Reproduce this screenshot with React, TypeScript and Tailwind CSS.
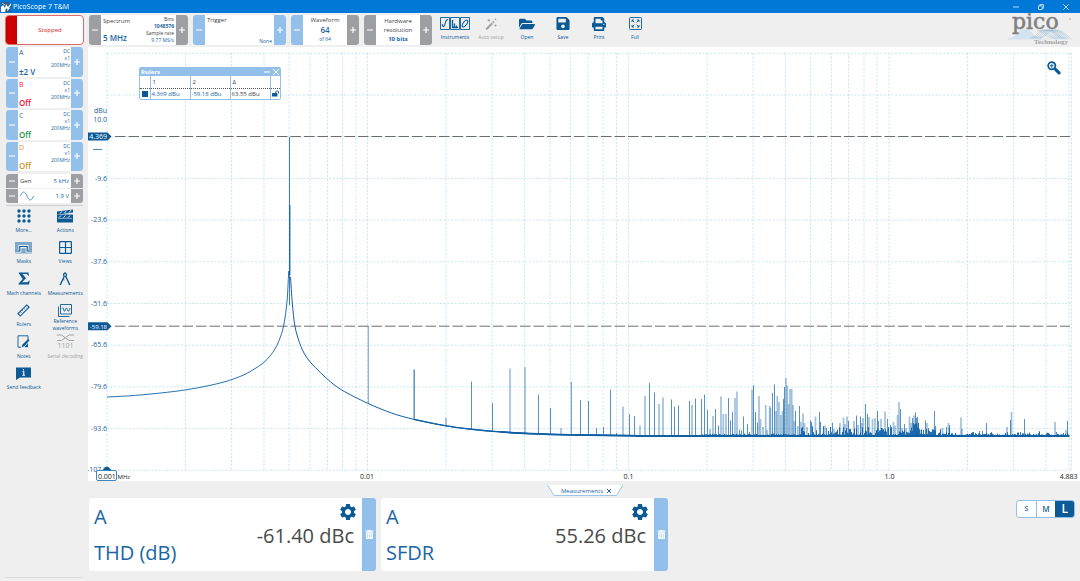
import React from "react";
import { FaFolderOpen, FaSave, FaPrint, FaLockOpen, FaTrashAlt } from "react-icons/fa";
import { MdSettings } from "react-icons/md";

type Tone = "blue" | "gray";

const toneClass: Record<Tone, string> = {
  blue: "bg-[#93c0ea]",
  gray: "bg-[#9e9fa2]",
};

function StepButton({ tone, kind, label }: { tone: Tone; kind: "minus" | "plus"; label: string }) {
  return (
    <button type="button" aria-label={label} className={`flex w-[12px] shrink-0 items-center justify-center ${toneClass[tone]}`}>
      <svg viewBox="0 0 6 6" className="h-[6px] w-[6px]" stroke="#fff" strokeWidth="1.2" fill="none">
        <path d={kind === "minus" ? "M0 3H6" : "M0 3H6M3 0V6"} />
      </svg>
    </button>
  );
}

function Stepper({ name, left, right, width, children }: { name: string; left: Tone; right: Tone; width: string; children: React.ReactNode }) {
  return (
    <div className={`flex h-[30px] shrink-0 overflow-hidden rounded-[3px] bg-white ${width}`}>
      <StepButton tone={left} kind="minus" label={`Decrease ${name}`} />
      {children}
      <StepButton tone={right} kind="plus" label={`Increase ${name}`} />
    </div>
  );
}

function Channel({ name, value, color }: { name: string; value: string; color: string }) {
  return (
    <div className="flex overflow-hidden rounded-[3px] bg-white">
      <StepButton tone="blue" kind="minus" label={`Decrease range ${name}`} />
      <div className="flex min-w-0 flex-1 justify-between pr-px pl-px">
        <div className={`flex flex-col justify-between pt-px text-[8px] leading-[10px] ${color}`}>
          <span className="text-[7px]">{name}</span>
          <span className="font-semibold">{value}</span>
        </div>
        <div className="pt-px text-right text-[5px] leading-[7px] text-[#2d6497]">
          <div>DC</div>
          <div>x1</div>
          <div>200MHz</div>
        </div>
      </div>
      <StepButton tone="blue" kind="plus" label={`Increase range ${name}`} />
    </div>
  );
}

function Tool({ label, children, disabled = false }: { label: string; children: React.ReactNode; disabled?: boolean }) {
  return (
    <button type="button" disabled={disabled} className={`flex h-[32px] w-[36px] shrink-0 flex-col items-center ${disabled ? "text-[#a3a3a3]" : "text-[#0b5a96]"}`}>
      <span className="flex h-[17px] shrink-0 items-center justify-center">{children}</span>
      <span className="mt-[2px] text-[5px] leading-[6px] whitespace-nowrap">{label}</span>
    </button>
  );
}

function SideTool({ label, children, disabled = false }: { label: string; children: React.ReactNode; disabled?: boolean }) {
  return (
    <button type="button" disabled={disabled} className={`flex flex-col items-center pt-[2px] ${disabled ? "text-[#a3a3a3]" : "text-[#0b5a96]"}`}>
      <span className="flex h-[15px] items-center justify-center">{children}</span>
      <span className="flex h-[14px] items-center text-center text-[5px] leading-[7px] whitespace-pre-line">{label}</span>
    </button>
  );
}

const X0 = 107;
const DECADE = 260.7;
const BASE = 436;

const gridX: number[] = [];
for (let d = 0; d < 4; d++) {
  for (let n = 1; n < 10; n++) {
    const x = X0 + DECADE * (d + Math.log10(n));
    if (x < 1060) gridX.push(Math.round(x * 2) / 2);
  }
}
gridX.push(1069, 1071.5);
const gridY = Array.from({ length: 11 }, (_, i) => 53.3 + i * 41.7);

/* Harmonic lines: x, top, and 1 for a faint two pixel wide line */
const spikes: [number, number, number][] = [
  [446, 418, 0], [471.5, 381.5, 0], [492.5, 403, 0], [510, 368.5, 1], [525, 367, 1], [538.5, 394.5, 0], [550.5, 408, 0],
  [561, 428, 1], [571.3, 382, 0], [580.5, 400, 0], [588.5, 401, 0], [596.5, 428, 0], [603.5, 427, 0], [610.5, 389.5, 0],
  [616.5, 433, 0], [623, 406.5, 1], [629.5, 414, 0], [634.5, 416, 0], [640, 425.5, 1], [645, 396, 1], [649.5, 383, 0],
  [654.5, 392.5, 0], [659, 404, 1], [663, 397.5, 1], [671.5, 399.5, 0], [674.5, 406.5, 0], [678.5, 405.5, 0], [689.5, 401, 0],
  [692, 405, 1], [695.5, 398.5, 0], [701.5, 399, 0], [704.5, 394.5, 0], [707.5, 410, 0], [710, 429, 0], [713, 416, 1],
  [715.5, 409, 0], [718.5, 425.5, 0], [721, 396.5, 1], [723.3, 414, 1], [726, 414, 1], [728.5, 398, 0], [730.5, 420.5, 0],
  [732.5, 412, 0], [735, 398, 1], [737, 391.5, 1], [739.5, 429.5, 0], [741.5, 430.5, 0], [743.5, 416.5, 0], [747.5, 424, 0],
  [749.5, 432, 0], [752, 389.5, 1], [753.5, 385, 0], [755.5, 412, 0], [757.5, 422.5, 0], [759, 396, 1], [760.5, 419, 1],
  [763, 427, 1], [765.7, 405, 1], [767, 430, 1], [769.7, 406, 1], [770.5, 408, 1], [772.5, 393, 0], [774.5, 384.5, 0],
  [776, 411, 1], [777.3, 396, 1], [779, 402, 1], [780.8, 415, 1], [782.5, 411, 1], [783.5, 399, 0], [784.5, 387, 0],
  [786, 378, 1], [787.3, 385.5, 1], [788.6, 404, 1], [790, 389, 1], [791.7, 389, 1], [793, 405, 1], [794.3, 421, 1],
  [795.5, 411, 0], [797.8, 426, 1], [799.5, 406, 0], [801, 422, 1], [803, 413.5, 1], [804.5, 423, 1], [807, 427, 1],
  [810.5, 420.5, 0], [811.5, 422, 0], [815.5, 416.5, 1], [819.5, 412, 0], [820.5, 422, 0], [825, 425.5, 1], [826.5, 428, 0],
  [832.5, 422.7, 0], [834, 429, 1], [840, 423, 1], [843.5, 417.5, 1], [845, 424, 0], [847, 416.5, 1], [848.5, 421, 0],
  [850, 430, 0], [854, 421, 1], [856.5, 415.5, 0], [858, 425, 0], [860.5, 416.5, 0], [861.5, 423, 1], [863, 418, 1],
  [865.5, 404, 0], [867.5, 414, 0], [869, 417, 1], [872.5, 419, 1], [875, 418, 1], [877.5, 411, 0], [878.5, 421, 0],
  [881, 419, 1], [882.5, 428, 0], [885, 411.5, 1], [887.5, 419, 0], [890.5, 425, 0], [893.5, 422, 1], [895, 426, 0],
  [897.5, 415, 1], [899, 402, 1], [900.5, 409, 0], [902, 428, 0], [904.5, 424, 0], [906, 428, 1], [909.5, 416.5, 1],
  [911, 423, 0], [912.5, 418, 0], [914, 415.5, 0], [915.5, 412.5, 0], [916.5, 418, 0], [917.5, 417, 0], [919, 428, 0],
  [921, 430, 0], [925.5, 420.5, 0], [927, 423, 1], [928.5, 428, 0], [934.5, 411, 0], [935.5, 426, 0], [940, 432, 0],
  [942.5, 428, 1], [946.5, 427, 0], [948.5, 423, 1], [949.5, 425, 0], [961, 417.5, 1], [962, 429, 0], [979.5, 431, 0],
  [982.5, 431, 0], [986.5, 423, 0], [1007, 427, 1], [1010.5, 420, 0], [1011.5, 412, 1], [1024.5, 419, 0], [1039.5, 431, 0],
  [1055, 422, 1], [1056.5, 432, 0], [1067.5, 421, 0], [1066, 430, 0],
];

/* Noise floor, a height envelope over the upper decade */
const noise: string = (() => {
  let seed = 7;
  const rnd = () => {
    seed = (seed * 16807) % 2147483647;
    return seed / 2147483647;
  };
  let d = "";
  for (let x = 700; x < 1069; x += 1) {
    const hump = 14 * Math.exp(-(((x - 914) / 5) ** 2));
    const mid = x > 800 && x < 955 ? 9 : x <= 800 ? 1.5 : 3;
    const r = rnd();
    const h = 1 + mid * r * r * r + hump * (0.3 + rnd() * 0.7);
    d += `M${x + 0.5} ${BASE}V${(BASE - h).toFixed(1)}`;
  }
  return d;
})();

type Point = [number, number];

const leftSkirt: Point[] = [
  [107, 397], [130, 395.8], [155, 393.6], [180, 390.7], [203, 386.8], [225, 381.7], [245, 374.3], [264, 362.3],
  [275, 349], [281.7, 333.3], [285, 318], [287.3, 298], [288.7, 271],
];
const rightSkirt: Point[] = [
  [290.5, 277], [292.3, 303], [295, 326.7], [301, 346.7], [309.3, 361], [327.3, 379], [341.7, 390], [367.7, 403.3],
  [391.7, 413.1], [414, 419.4], [446.3, 425.9], [471.7, 429.3], [500, 431.9], [530, 433.6], [571, 434.8], [640, 435.8],
];

/* Catmull-Rom spline through the points, written as cubic segments */
function smooth(points: Point[]): string {
  let d = `M${points[0][0]} ${points[0][1]}`;
  for (let i = 0; i < points.length - 1; i++) {
    const p0 = points[Math.max(i - 1, 0)];
    const p1 = points[i];
    const p2 = points[i + 1];
    const p3 = points[Math.min(i + 2, points.length - 1)];
    const t = 7;
    d += `C${p1[0] + (p2[0] - p0[0]) / t} ${p1[1] + (p2[1] - p0[1]) / t} ${p2[0] - (p3[0] - p1[0]) / t} ${p2[1] - (p3[1] - p1[1]) / t} ${p2[0]} ${p2[1]}`;
  }
  return d;
}

/* Height of the falling curve under a harmonic line */
function floorAt(x: number): number {
  for (let i = 0; i < rightSkirt.length - 1; i++) {
    const [xa, ya] = rightSkirt[i];
    const [xb, yb] = rightSkirt[i + 1];
    if (x >= xa && x <= xb) return ya + ((yb - ya) * (x - xa)) / (xb - xa);
  }
  return BASE;
}

const yLabels: [string, number][] = [
  ["-9.6", 178.3], ["-23.6", 220], ["-37.6", 261.7], ["-51.6", 303.4], ["-65.6", 345], ["-79.6", 386.8], ["-93.6", 428.5], ["-107.6", 470],
];

function Badge({ y, text, size }: { y: number; text: string; size: number }) {
  return (
    <g>
      <path d={`M88 ${y - 4}H107.500L111.500 ${y}L107.500 ${y + 4}H88Z`} fill="#0b5a96" />
      <text x="107" y={y + 2.5} textAnchor="end" fontSize={size} fill="#fff">{text}</text>
    </g>
  );
}

function SpectrumChart() {
  return (
    <svg viewBox="88 47 992 434" className="block h-auto w-full" role="img" aria-label="Spectrum" fontSize="7">
      <g stroke="#b9e0ee" strokeWidth="0.8" strokeDasharray="2 1.7" fill="none">
        {gridX.map((x) => <path key={x} d={`M${x} 53V470`} />)}
        {gridY.map((y) => <path key={y} d={`M107 ${y}H1071.5`} />)}
      </g>
      <g fill="#1a65a3">
        <text x="107" y="113" textAnchor="end">dBu</text>
        <text x="107" y="122" textAnchor="end">10.0</text>
        {yLabels.map(([t, y]) => <text key={t} x="107" y={y + 2.3} textAnchor="end">{t}</text>)}
      </g>
      <path d="M93 149.5H102" stroke="#1a65a3" strokeWidth="0.8" />
      <g stroke="#6d6d6d" strokeWidth="1" strokeDasharray="10.5 3">
        <path d="M115 136.5H1070" />
        <path d="M115 326.2H1070" />
      </g>
      <g stroke="#0f5fa5" fill="none">
        <path strokeWidth="0.9" d={smooth(leftSkirt)} />
        <path strokeWidth="1" d={smooth(rightSkirt)} />
        <path strokeWidth="1.4" d={smooth(rightSkirt.slice(9))} />
        <path strokeWidth="1.8" d={smooth(rightSkirt.slice(12))} />
        <path strokeWidth="2.2" d="M636 436H1069.5" />
        <path strokeWidth="1" opacity="0.8" d="M289.5 137V305" />
        <path strokeWidth="1.4" opacity="0.8" d="M289.8 205V275" />
        <path strokeWidth="1" opacity="0.6" d="M368.3 326V403.5" />
        <path strokeWidth="1.6" opacity="0.65" d="M414.2 369.5V420" />
      </g>
      <path d={noise} stroke="#0f5fa5" strokeWidth="1" opacity="0.9" />
      <g stroke="#1464a8">
        {spikes.map(([x, y, faint]) => (
          <path key={`${x}`} d={`M${x} ${y}V${floorAt(x)}`} strokeWidth={faint ? 1.7 : 1} opacity={faint ? 0.4 : 0.7} />
        ))}
      </g>
      <Badge y={136.5} text="4.369" size={7} />
      <Badge y={326.2} text="-59.18" size={6} />
      <path d="M102.500 470L105.500 467.200Q107 466 108.500 467.200L111.500 470Z" fill="#0b5a96" />
      <rect x="96.500" y="470.500" width="20" height="10" rx="1.500" fill="#fff" stroke="#3f86bf" strokeWidth="1" />
      <g fill="#222">
        <text x="98" y="478.500">0.001</text>
        <text x="117.500" y="478.500" fontSize="6">MHz</text>
        <text x="367" y="478.500" textAnchor="middle">0.01</text>
        <text x="628.500" y="478.500" textAnchor="middle">0.1</text>
        <text x="889.500" y="478.500" textAnchor="middle">1.0</text>
        <text x="1077.500" y="478.500" textAnchor="end">4.883</text>
      </g>
    </svg>
  );
}

function RulersWindow() {
  return (
    <section aria-label="Rulers" className="absolute top-[20px] left-[51px] w-[142px] rounded-[2px] border border-[#93c0ea] bg-white text-[6px]">
      <header className="flex h-[8px] items-center bg-[#93c0ea] text-white">
        <h2 className="flex-1 pl-px text-[6px] leading-[8px] font-bold">Rulers</h2>
        <button type="button" aria-label="Minimise rulers" className="flex w-[9px] justify-center">
          <svg viewBox="0 0 6 6" className="h-[6px] w-[6px]" stroke="#fff"><path d="M0 3H6" /></svg>
        </button>
        <button type="button" aria-label="Close rulers" className="flex w-[9px] justify-center">
          <svg viewBox="0 0 6 6" className="h-[6px] w-[6px]" stroke="#fff"><path d="M0 0L6 6M6 0L0 6" /></svg>
        </button>
      </header>
      <table className="w-full table-fixed border-collapse">
        <colgroup>
          <col className="w-[10px]" />
          <col className="w-[40px]" />
          <col className="w-[40px]" />
          <col className="w-[40px]" />
          <col />
        </colgroup>
        <thead>
          <tr className="h-[12px] border-b border-dotted border-[#555] text-left text-[#444]">
            <th className="p-0" />
            <th className="border-l border-[#93c0ea] p-0 pl-[2px] leading-[10px] font-normal">1</th>
            <th className="border-l border-[#93c0ea] p-0 pl-[2px] leading-[10px] font-normal">2</th>
            <th className="border-l border-[#93c0ea] p-0 pl-[2px] leading-[10px] font-normal">Δ</th>
            <th className="border-l border-[#93c0ea] p-0" />
          </tr>
        </thead>
        <tbody>
          <tr className="h-[10px] whitespace-nowrap text-[#1a65a3]">
            <td className="p-0"><div className="mx-auto h-[6px] w-[6px] bg-[#0b5a96]" /></td>
            <td className="border-l border-[#93c0ea] p-0 pl-px leading-[10px]">4.369 dBu</td>
            <td className="border-l border-[#93c0ea] p-0 pl-px leading-[10px]">-59.18 dBu</td>
            <td className="border-l border-[#93c0ea] p-0 pl-px leading-[10px] text-[#444]">63.55 dBu</td>
            <td className="border-l border-[#93c0ea] p-0"><FaLockOpen className="mx-auto h-[7px] w-[7px] text-[#0b5a96]" /></td>
          </tr>
        </tbody>
      </table>
    </section>
  );
}

function Measurement({ source, name, value }: { source: string; name: string; value: string }) {
  return (
    <article className="flex h-[73px] w-[287px] overflow-hidden rounded-[3px] bg-white">
      <div className="flex flex-1 justify-between pr-[4px] pl-[5px] text-[20px]">
        <div className="flex flex-col gap-[10px] pt-[6px] leading-[26px] text-[#1a65a3]">
          <span>{source}</span>
          <span>{name}</span>
        </div>
        <div className="flex flex-col items-end pt-[4px] text-[#4a4a4a]">
          <button type="button" aria-label={`${name} settings`} className="text-[#0b5a96]"><MdSettings className="block h-[20px] w-[20px]" /></button>
          <span className="pr-[4px] leading-[27px]">{value}</span>
        </div>
      </div>
      <button type="button" aria-label={`Delete ${name}`} className="flex w-[14px] items-center justify-center bg-[#93c0ea] text-white">
        <FaTrashAlt className="h-[9px] w-[9px]" />
      </button>
    </article>
  );
}

function PicoLogo() {
  return (
    <svg viewBox="0 0 66 32" className="h-[32px] w-[66px] shrink-0 overflow-visible" role="img" aria-label="pico Technology">
      <g fill="none" strokeWidth="0.5">
        <path d="M0 24C8 24 10 15 17 15S26 24 33 24" stroke="#b9d3e8" fill="#d3e4f1" />
        {[0, 2, 4, 6, 8, 10].map((i) => (
          <path key={i} d={`M${22 + i} 23C${28 + i} 23 ${30 + i} 15 ${36 + i} 15S${46 + i} 17 ${52 + i} 23`} stroke="#9bbdd6" />
        ))}
        {[0, 3, 6, 9, 12].map((i) => (
          <path key={`b${i}`} d={`M${29 + i} 15C${35 + i} 16 ${38 + i} 23 ${48 + i} 23.500`} stroke="#9bbdd6" />
        ))}
        <path d="M0 24H64" stroke="#c5d9e8" />
      </g>
      <text x="4" y="14" fontFamily="'DejaVu Serif', serif" fontSize="22" fill="#808080" stroke="#808080" strokeWidth="0.500">pico</text>
      <text x="26" y="29" fontFamily="'Liberation Serif', serif" fontSize="7" fontWeight="700" fill="#a3a3a3">Technology</text>
      <circle cx="62" cy="4" r="0.800" fill="none" stroke="#999" strokeWidth="0.400" />
    </svg>
  );
}

export default function App() {
  return (
    <div className="flex min-h-screen flex-col bg-[#efefef] font-['Open_Sans','Noto_Sans',sans-serif] text-[#444]">
      <header className="flex h-[13px] items-center bg-[#0078d7] text-white">
        <svg viewBox="0 0 10 10" className="ml-px h-[10px] w-[10px]">
          <path d="M0 0H10V10H0Z" fill="#2d5f8f" />
          <path d="M0 10V5L2 3L4 6L5 2L7 5L10 1V3L7 8L5 6L4 10Z" fill="#fff" />
          <path d="M1 1L4 3M6 9L9 6" stroke="#cfe4f6" strokeWidth="0.800" />
        </svg>
        <h1 className="ml-[2px] flex-1 text-[7px] leading-[12px]">PicoScope 7 T&amp;M</h1>
        <div className="flex gap-[4px] pr-[4px]">
          <button type="button" aria-label="Minimise" className="flex w-[21px] justify-center"><svg viewBox="0 0 6 6" className="h-[6px] w-[6px]" fill="none" stroke="#fff" strokeWidth="0.700"><path d="M0 3H6" /></svg></button>
          <button type="button" aria-label="Restore" className="flex w-[21px] justify-center"><svg viewBox="0 0 6 6" className="h-[6px] w-[6px]" fill="none" stroke="#fff" strokeWidth="0.700"><path d="M0.500 1.800H4.200V5.500H0.500ZM1.800 1.600V0.500H5.500V4.200H4.400" /></svg></button>
          <button type="button" aria-label="Close" className="flex w-[21px] justify-center"><svg viewBox="0 0 6 6" className="h-[6px] w-[6px]" fill="none" stroke="#fff" strokeWidth="0.700"><path d="M0.300 0.300L5.700 5.700M5.700 0.300L0.300 5.700" /></svg></button>
        </div>
      </header>

      <div className="flex flex-1">
        <aside className="flex w-[88px] shrink-0 flex-col pt-[2px] pb-[3px]">
          <button type="button" className="mr-[4px] ml-[5px] flex h-[30px] overflow-hidden rounded-[4px] border border-[#dc6a6a] bg-white">
            <span className="h-full w-[11px] bg-[#cc0000]" />
            <span className="flex h-full flex-1 items-center justify-center text-[6px] font-medium text-[#cc1818]">Stopped</span>
          </button>
          <div className="mt-[2px] mr-[5px] ml-[6px] grid h-[124px] grid-rows-4 gap-[2px]">
            <Channel name="A" value="±2 V" color="text-[#1a65a3]" />
            <Channel name="B" value="Off" color="text-[#f0143c]" />
            <Channel name="C" value="Off" color="text-[#1f9448]" />
            <Channel name="D" value="Off" color="text-[#cf9a2c]" />
          </div>
          <div className="mt-[3px] mr-[5px] ml-[6px] flex flex-col gap-px overflow-hidden rounded-[3px] text-[6px]">
            <div className="flex h-[14px]">
              <StepButton tone="gray" kind="minus" label="Decrease frequency" />
              <div className="flex flex-1 items-center justify-between bg-white px-[2px]"><span>Gen</span><span className="text-[#1a65a3]">5 kHz</span></div>
              <StepButton tone="gray" kind="plus" label="Increase frequency" />
            </div>
            <div className="flex h-[14px]">
              <StepButton tone="gray" kind="minus" label="Decrease amplitude" />
              <div className="flex flex-1 items-center justify-between bg-white px-[2px] text-[#1a65a3]">
                <svg viewBox="0 0 14 10" className="h-[10px] w-[14px]" fill="none" stroke="#4b87ba" strokeWidth="0.900"><path d="M0.500 5C2 0 5 -0.500 7 5S12 10 13.500 5" /></svg>
                <span>1.9 V</span>
              </div>
              <StepButton tone="gray" kind="plus" label="Increase amplitude" />
            </div>
          </div>
          <hr className="mt-[2px] mr-[5px] ml-[6px] border-[#cfcfcf]" />
          <nav aria-label="Tools" className="ml-[3px] grid h-[189px] w-[83px] grid-cols-2 grid-rows-6">
            <SideTool label="More...">
              <svg viewBox="0 0 14 14" className="h-[14px] w-[14px]" fill="currentColor">
                {[2, 7, 12].map((y) => [2, 7, 12].map((x) => <circle key={`${x}-${y}`} cx={x} cy={y} r="1.700" />))}
              </svg>
            </SideTool>
            <SideTool label="Actions">
              <svg viewBox="0 0 18 14" className="h-[14px] w-[18px]">
                <path d="M1 2.500L17 0.500V3.500L1 5.500Z" fill="currentColor" />
                <path d="M4 4.600L6 2.300M8.500 4L10.500 1.800M13 3.500L15 1.200" stroke="#efefef" strokeWidth="1" />
                <rect x="1" y="5.500" width="16" height="8" rx="0.500" fill="currentColor" />
                <path d="M3 8.500L5 6.500M7.500 8.500L9.500 6.500M12 8.500L14 6.500" stroke="#efefef" strokeWidth="1" />
                <path d="M2 9.300H16" stroke="#efefef" strokeWidth="0.600" />
              </svg>
            </SideTool>
            <SideTool label="Masks">
              <svg viewBox="0 0 17 13" className="h-[13px] w-[17px]">
                <path d="M0 1H17V9H13.500V4H3.500V9H0Z" fill="#7fa9cb" />
                <path d="M0 10H4.800V5.500H12.200V10H17" fill="none" stroke="currentColor" strokeWidth="1.100" />
                <path d="M0 12.500V11.500H6.300V7.200H10.700V11.500H17V12.500Z" fill="#7fa9cb" />
              </svg>
            </SideTool>
            <SideTool label="Views">
              <svg viewBox="0 0 13 13" className="h-[13px] w-[13px]" fill="none" stroke="currentColor" strokeWidth="1.200"><rect x="0.600" y="0.600" width="11.800" height="11.800" rx="0.500" /><path d="M6.500 0.500V12.500M0.500 6.500H12.500" /></svg>
            </SideTool>
            <SideTool label="Math channels">
              <svg viewBox="0 0 12 13" className="h-[13px] w-[12px]" fill="currentColor"><path d="M0.800 0.500H10.500L10.800 3.800H10C9.500 2.300 9 2 7.500 2H4.500L8 6.200L4 10.300H8C9.800 10.300 10.300 10 11 8.500H11.700L11 12.500H0.500V11.800L4.700 7L0.800 1.300Z" /></svg>
            </SideTool>
            <SideTool label="Measurements">
              <svg viewBox="0 0 12 14" className="h-[14px] w-[12px]" fill="none" stroke="currentColor"><circle cx="6" cy="2.800" r="1.500" strokeWidth="1.200" /><path d="M6 0V1.200" /><path d="M5.300 4.200L1.200 13M6.700 4.200L10.800 13" strokeWidth="1.400" /><path d="M3.700 7.500L5.500 8" strokeWidth="0.800" /></svg>
            </SideTool>
            <SideTool label="Rulers">
              <svg viewBox="0 0 14 14" className="h-[13px] w-[13px]" fill="none" stroke="currentColor"><path d="M1 10.500L10.500 1L13 3.500L3.500 13Z" strokeWidth="1.200" /><path d="M3.500 8.500L4.500 9.500M5.500 6.500L6.500 7.500M7.500 4.500L8.500 5.500M9.500 2.500L10.500 3.500" strokeWidth="0.700" /></svg>
            </SideTool>
            <SideTool label={"Reference\nwaveforms"}>
              <svg viewBox="0 0 14 13" className="h-[13px] w-[14px]" fill="none" stroke="currentColor" strokeWidth="0.900"><path d="M2.500 0.500H13.500V10H2.500Z" /><path d="M0.500 2.500V12.500H11.500" /><path d="M4 4.500C4.800 3 5.500 4 5.800 6S7 7.500 7.500 5.500S8.800 3.500 9.500 6S11.300 7 12 4" /></svg>
            </SideTool>
            <SideTool label="Notes">
              <svg viewBox="0 0 13 13" className="h-[13px] w-[13px]"><path d="M11 5V0.800H1V12.200H4" fill="none" stroke="currentColor" strokeWidth="0.900" /><path d="M11.200 4L12.500 5.200L7.500 11L4.500 12.500L5.500 9.500Z" fill="currentColor" /><path d="M11 8V12.200H7.500Z" fill="currentColor" /></svg>
            </SideTool>
            <SideTool label="Serial decoding" disabled>
              <svg viewBox="0 0 17 15" className="h-[15px] w-[17px]"><path d="M0 1H4.500L12 6.500H17M0 6.500H4.500L12 1H17" fill="none" stroke="currentColor" /><text x="8.500" y="14" textAnchor="middle" fontSize="7" fill="currentColor">1101</text></svg>
            </SideTool>
            <SideTool label="Send feedback">
              <svg viewBox="0 0 15 13" className="h-[13px] w-[15px]"><path d="M0 0.500H15V10.500H4L0 13Z" fill="currentColor" /><path d="M7.500 2V3.600M6.500 4.800H7.800V8.300M6.300 8.300H8.900" stroke="#fff" strokeWidth="1.100" fill="none" /></svg>
            </SideTool>
          </nav>
          <hr className="mt-auto mr-[6px] ml-[5px] border-[#d8d8d8]" />
        </aside>

        <main className="flex min-w-0 flex-1 flex-col">
          <div className="flex h-[34px] shrink-0 gap-[5px] pt-[2px] pl-px">
            <Stepper name="spectrum range" left="gray" right="gray" width="w-[99px]">
              <div className="flex flex-1 justify-between pr-[2px] pl-[2px]">
                <div className="flex flex-col justify-between pt-px pb-[2px] leading-[10px]">
                  <span className="text-[6px]">Spectrum</span>
                  <span className="text-[8px] font-semibold whitespace-nowrap text-[#1a65a3]">5 MHz</span>
                </div>
                <div className="flex flex-col pt-px text-right text-[5px] leading-[7px] text-[#1a65a3]">
                  <span className="text-[#444]">Bins</span>
                  <span className="font-bold">1048576</span>
                  <span className="text-[#444]">Sample rate</span>
                  <span>9.77 MS/s</span>
                </div>
              </div>
            </Stepper>
            <Stepper name="trigger" left="blue" right="blue" width="w-[93px]">
              <div className="flex flex-1 flex-col justify-between px-[2px] pt-px leading-[9px]">
                <span className="text-[6px]">Trigger</span>
                <span className="self-end text-[5px] leading-[8px] text-[#1a65a3]">None</span>
              </div>
            </Stepper>
            <Stepper name="waveform" left="blue" right="gray" width="w-[68px]">
              <div className="flex flex-1 flex-col items-center justify-center text-[#1a65a3]">
                <span className="text-[6px] leading-[9px] text-[#444]">Waveform</span>
                <span className="text-[8px] leading-[10px] font-semibold">64</span>
                <span className="text-[5px] leading-[9px]">of 64</span>
              </div>
            </Stepper>
            <Stepper name="hardware resolution" left="gray" right="gray" width="w-[68px]">
              <div className="flex flex-1 flex-col items-center justify-center text-center text-[6px] leading-[9px]">
                <span>Hardware</span>
                <span>resolution</span>
                <span className="font-bold text-[#1a65a3]">10 bits</span>
              </div>
            </Stepper>
            <div className="flex">
              <Tool label="Instruments">
                <svg viewBox="0 0 30 13" className="h-[13px] w-[30px]" fill="none" stroke="currentColor"><path d="M0.500 0.500H9.500V12.500H0.500ZM10.500 0.500H19.500V12.500H10.500ZM20.500 0.500H29.500V12.500H20.500Z" strokeWidth="0.900" /><path d="M2 7C3 10.500 4.500 10.500 5 7S7 2 8 3" strokeWidth="1.100" /><path d="M12.500 3V10.500H18M14.500 10V6.500M16.500 10V8.500" strokeWidth="1.300" /><ellipse cx="25" cy="6.500" rx="1.800" ry="4" transform="rotate(35 25 6.5)" strokeWidth="1.100" /></svg>
              </Tool>
              <Tool label="Auto setup" disabled>
                <svg viewBox="0 0 12 12" className="h-[12px] w-[12px]" fill="currentColor"><path d="M1 10L6.500 4.500L8 6L2.500 11.500Q1.500 12 1 11.500T1 10ZM7 4L8.200 2.800L9.700 4.300L8.500 5.500Z" /><path d="M4 0.500L4.600 1.700L5.800 2.300L4.600 2.900L4 4.100L3.400 2.900L2.200 2.300L3.400 1.700ZM10.500 6L11 7L12 7.500L11 8L10.500 9L10 8L9 7.500L10 7ZM10.500 0L10.900 0.900L11.800 1.300L10.900 1.700L10.500 2.600L10.100 1.700L9.200 1.300L10.100 0.900Z" /></svg>
              </Tool>
              <Tool label="Open"><FaFolderOpen className="h-[16px] w-[16px]" /></Tool>
              <Tool label="Save"><FaSave className="h-[15px] w-[14px]" /></Tool>
              <Tool label="Print"><FaPrint className="h-[14px] w-[14px]" /></Tool>
              <Tool label="Full">
                <svg viewBox="0 0 13 13" className="h-[13px] w-[13px]" fill="none" stroke="currentColor" strokeWidth="0.900"><rect x="0.500" y="0.500" width="12" height="12" rx="1" /><path d="M3 5V3H5M3 3L5.300 5.300M8 3H10V5M10 3L7.700 5.300M3 8V10H5M3 10L5.300 7.700M10 8V10H8M10 10L7.700 7.700" /></svg>
              </Tool>
            </div>
            <div className="ml-auto pr-[6px]"><PicoLogo /></div>
          </div>

          <section className="relative bg-white">
            <SpectrumChart />
            <RulersWindow />
            <button type="button" aria-label="Zoom" className="absolute top-[14px] right-[19px] text-[#0b5a96]">
              <svg viewBox="0 0 14 14" className="block h-[14px] w-[14px]" fill="none" stroke="currentColor">
                <circle cx="4.800" cy="4.800" r="3.600" strokeWidth="1.800" />
                <path d="M4.800 3V6.600M3 4.800H6.600" strokeWidth="1" />
                <path d="M7.600 7.600L8.800 8.800" strokeWidth="1.800" />
                <path d="M9 8.800L12 11.800" strokeWidth="3.200" strokeLinecap="round" />
              </svg>
            </button>
          </section>

          <section className="pl-px">
            <div className="flex h-[17px] justify-center pt-[4px]">
              <div className="relative flex h-[11px] w-[76px] items-center justify-center gap-[4px] text-[6px] text-[#1a65a3]">
                <svg viewBox="0 0 76 11" className="absolute inset-0 h-full w-full" fill="#fff" stroke="#93c0ea" strokeWidth="0.900"><path d="M0.500 0L7 10.500H69.500L76 0" /></svg>
                <span className="relative pl-[3px] leading-[10px]">Measurements</span>
                <button type="button" aria-label="Close measurements" className="relative">
                  <svg viewBox="0 0 4 4" className="h-[4px] w-[4px]" stroke="#1a65a3" strokeWidth="1"><path d="M0 0L4 4M4 0L0 4" /></svg>
                </button>
              </div>
            </div>
            <div className="flex items-start gap-[5px] pr-[5px]">
              <Measurement source="A" name="THD (dB)" value="-61.40 dBc" />
              <Measurement source="A" name="SFDR" value="55.26 dBc" />
              <div role="group" aria-label="Size" className="mt-[2px] ml-auto flex h-[18px] w-[59px] overflow-hidden rounded-[3px] border border-[#93c0ea] bg-white text-[7px] font-semibold text-[#1a65a3]">
                <button type="button" className="flex-1">S</button>
                <button type="button" className="flex-1 border-l border-[#93c0ea] text-[8px]">M</button>
                <button type="button" aria-pressed="true" className="flex-1 bg-[#0b5a96] text-[12px] leading-[16px] text-white">L</button>
              </div>
            </div>
          </section>
        </main>
      </div>
    </div>
  );
}
